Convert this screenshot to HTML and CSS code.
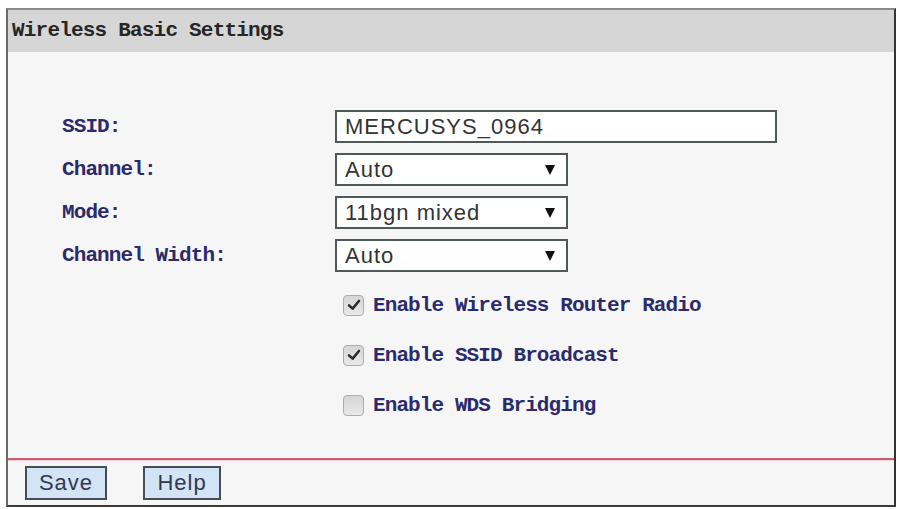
FILE: index.html
```html
<!DOCTYPE html>
<html lang="en">

<head>
  <meta charset="UTF-8">
  <meta name="viewport" content="width=device-width, initial-scale=1.0">
  <title>Wireless Basic Settings</title>
  <link rel="stylesheet" href="styles.css">
</head>

<body>
  <div class="panel">
    <div class="panel-title">Wireless Basic Settings</div>

    <div class="panel-body">
      <div class="form-grid">
        <label class="field-label" for="ssid">SSID:</label>
        <div class="field">
          <input type="text" id="ssid" class="text-input" value="MERCUSYS_0964">
        </div>

        <label class="field-label" for="channel">Channel:</label>
        <div class="field select-box">
          <select id="channel">
            <option>Auto</option>
          </select>
        </div>

        <label class="field-label" for="mode">Mode:</label>
        <div class="field select-box">
          <select id="mode">
            <option>11bgn mixed</option>
          </select>
        </div>

        <label class="field-label" for="width">Channel Width:</label>
        <div class="field select-box">
          <select id="width">
            <option>Auto</option>
          </select>
        </div>
      </div>

      <div class="checks">
        <div class="check-row">
          <span class="check-box">
            <svg viewBox="0 0 20 20" width="20" height="20"><path d="M4.5 10.5 L8.5 14 L15.5 5.5" fill="none" stroke="#2a2a2a" stroke-width="2.8" stroke-linecap="round" stroke-linejoin="round"/></svg>
          </span>
          <span class="check-text">Enable Wireless Router Radio</span>
        </div>
        <div class="check-row">
          <span class="check-box">
            <svg viewBox="0 0 20 20" width="20" height="20"><path d="M4.5 10.5 L8.5 14 L15.5 5.5" fill="none" stroke="#2a2a2a" stroke-width="2.8" stroke-linecap="round" stroke-linejoin="round"/></svg>
          </span>
          <span class="check-text">Enable SSID Broadcast</span>
        </div>
        <div class="check-row">
          <span class="check-box"></span>
          <span class="check-text">Enable WDS Bridging</span>
        </div>
      </div>
    </div>

    <div class="panel-footer">
      <button class="btn btn-save">Save</button>
      <button class="btn btn-help">Help</button>
    </div>
  </div>
</body>

</html>
```

FILE: styles.css
```css
body {
  margin: 0;
  background-color: #ffffff;
  font-family: "Liberation Sans", Arial, sans-serif;
}

.panel {
  margin: 8px 0 0 6px;
  width: 890px;
  box-sizing: border-box;
  border: 2px solid #555;
  border-top-color: #8a8a8a;
  border-left-color: #6a6a6a;
  border-right-color: #333;
  border-bottom-color: #3a3a3a;
  background-color: #f6f6f6;
}

.panel-title {
  height: 42px;
  line-height: 42px;
  padding-left: 4px;
  background-color: #d6d6d6;
  font-family: "Liberation Mono", monospace;
  font-weight: bold;
  font-size: 21px;
  letter-spacing: -0.8px;
  color: #262626;
}

.panel-body {
  padding: 58px 0 38px 54px;
}

.form-grid {
  display: grid;
  grid-template-columns: 273px auto;
  grid-auto-rows: 33px;
  row-gap: 10px;
}

.field-label {
  display: flex;
  align-items: center;
  font-family: "Liberation Mono", monospace;
  font-weight: bold;
  font-size: 21px;
  letter-spacing: -0.9px;
  color: #2b2b6c;
}

.field {
  display: flex;
  align-items: stretch;
}

.text-input,
.select-box select {
  box-sizing: border-box;
  height: 33px;
  margin: 0;
  padding: 0 8px;
  border: 2px solid #4f5a58;
  background-color: #ffffff;
  font-family: "Liberation Sans", Arial, sans-serif;
  font-size: 22px;
  letter-spacing: 1px;
  color: #333;
  outline: none;
}

.text-input {
  width: 442px;
}

.select-box {
  position: relative;
}

.select-box select {
  width: 233px;
  appearance: none;
  -webkit-appearance: none;
  border-radius: 0;
}

.select-box::after {
  content: "";
  position: absolute;
  left: 210px;
  top: 12px;
  border-left: 5px solid transparent;
  border-right: 5px solid transparent;
  border-top: 10px solid #111;
  pointer-events: none;
}

.checks {
  margin-top: 18px;
  padding-left: 281px;
  display: flex;
  flex-direction: column;
  gap: 20px;
}

.check-row {
  display: flex;
  align-items: center;
  height: 30px;
  gap: 9px;
}

.check-box {
  width: 21px;
  height: 21px;
  box-sizing: border-box;
  border: 1px solid #adadad;
  border-radius: 4px;
  background: linear-gradient(#d6d6d6, #e8e8e8);
  display: flex;
  align-items: center;
  justify-content: center;
}

.check-box svg {
  width: 18px;
  height: 18px;
}

.check-text {
  font-family: "Liberation Mono", monospace;
  font-weight: bold;
  font-size: 21px;
  letter-spacing: -0.9px;
  color: #2b2b6c;
}

.panel-footer {
  height: 47px;
  box-sizing: border-box;
  padding: 6px 0 0 17px;
  border-top: 2px solid #c45e70;
  box-shadow: inset 0 1px 0 #f3d0d5;
  display: flex;
  align-items: flex-start;
  gap: 36px;
}

.btn {
  height: 34px;
  padding: 0;
  border: 2px solid #454d55;
  background-color: #d3e4f7;
  font-family: "Liberation Sans", Arial, sans-serif;
  font-size: 22px;
  letter-spacing: 1px;
  color: #34384a;
}

.btn-save {
  width: 82px;
}

.btn-help {
  width: 78px;
}
```
